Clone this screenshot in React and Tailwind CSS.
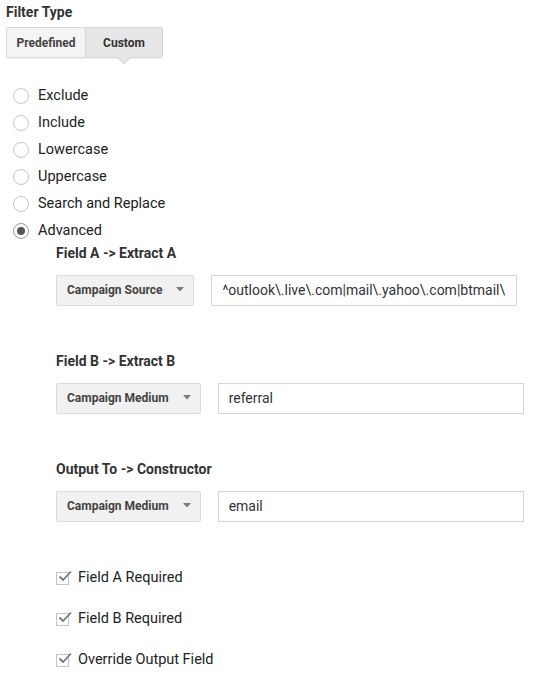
import { useState } from 'react';

const radios = ['Exclude', 'Include', 'Lowercase', 'Uppercase', 'Search and Replace', 'Advanced'];

const Caret = () => (
  <svg width="8" height="5" viewBox="0 0 8 5" className="shrink-0">
    <path d="M0 0 L8 0 L4 4.5 Z" fill="#7a7a7a" />
  </svg>
);

const FieldRow = ({ label, select, value, top }) => (
  <div className={top}>
    <div className="text-[14px] font-bold leading-[20px] text-[#333]">{label}</div>
    <div className="mt-[12px] flex items-center gap-[17px]">
      <div className="flex h-[31px] items-center gap-[14px] rounded-[2px] border border-[#dcdcdc] bg-[#f1f1f1] pb-[2px] pl-[10px] pr-[9px]">
        <span className="text-[12px] font-bold text-[#444]">{select}</span>
        <Caret />
      </div>
      <div className="flex h-[31px] w-[306px] items-center whitespace-nowrap border border-[#d6d6d6] bg-white pl-[10px] text-[14px] text-[#333]">
        {value}
      </div>
    </div>
  </div>
);

const Check = ({ label }) => (
  <div className="flex h-[20px] items-center">
    <div className="relative h-[13px] w-[13px] border border-[#c4c4c4] bg-white">
      <svg width="14" height="12" viewBox="0 0 14 12" className="absolute left-[1px] top-[-3px]">
        <path d="M1.5 6.5 L5 10 L13 1.5" fill="none" stroke="#777" strokeWidth="1.8" />
      </svg>
    </div>
    <span className="ml-[9px] text-[14.5px] text-[#222]">{label}</span>
  </div>
);

export default function App() {
  const [mode, setMode] = useState('Advanced');

  return (
    <div className="min-h-[680px] bg-white pl-[6px] pt-[2px] font-['Roboto',sans-serif] text-[#222]">
      <div className="text-[14px] font-bold leading-[20px] text-[#333]">Filter Type</div>

      <div className="mt-[5px] flex h-[31px] w-[157px] rounded-[2px] border border-[#d8d8d8] shadow-[0_1px_1px_rgba(0,0,0,0.06)]">
        <div className="flex w-[78px] items-center justify-center bg-[#f4f4f4] text-[12px] font-bold text-[#444]">
          Predefined
        </div>
        <div className="relative flex flex-1 items-center justify-center border-l border-[#d8d8d8] bg-[#e7e7e7] text-[12px] font-bold text-[#333]">
          Custom
          <div className="absolute left-1/2 top-[100%] h-[10px] w-[10px] -translate-x-1/2 -translate-y-[5px] rotate-45 border-b border-r border-[#d8d8d8] bg-[#e7e7e7]" />
        </div>
      </div>

      <div className="mt-[24px] flex flex-col">
        {radios.map((r) => (
          <button
            key={r}
            onClick={() => setMode(r)}
            className="flex h-[27px] items-center text-left"
          >
            <span
              className={
                mode === r
                  ? 'ml-[7px] flex h-[16px] w-[16px] items-center justify-center rounded-full border border-[#9a9a9a] bg-white'
                  : 'ml-[7px] flex h-[16px] w-[16px] items-center justify-center rounded-full border border-[#c6c6c6] bg-white'
              }
            >
              {mode === r && <span className="h-[8px] w-[8px] rounded-full bg-[#555]" />}
            </span>
            <span className="ml-[9px] text-[14.5px] text-[#222]">{r}</span>
          </button>
        ))}
      </div>

      <div className="pl-[50px]">
        <FieldRow
          label="Field A -> Extract A"
          select="Campaign Source"
          value="^outlook\.live\.com|mail\.yahoo\.com|btmail\"
          top="mt-[-1px]"
        />
        <FieldRow label="Field B -> Extract B" select="Campaign Medium" value="referral" top="mt-[45px]" />
        <FieldRow label="Output To -> Constructor" select="Campaign Medium" value="email" top="mt-[45px]" />

        <div className="mt-[46px] flex flex-col gap-[21px]">
          <Check label="Field A Required" />
          <Check label="Field B Required" />
          <Check label="Override Output Field" />
        </div>
      </div>
    </div>
  );
}
